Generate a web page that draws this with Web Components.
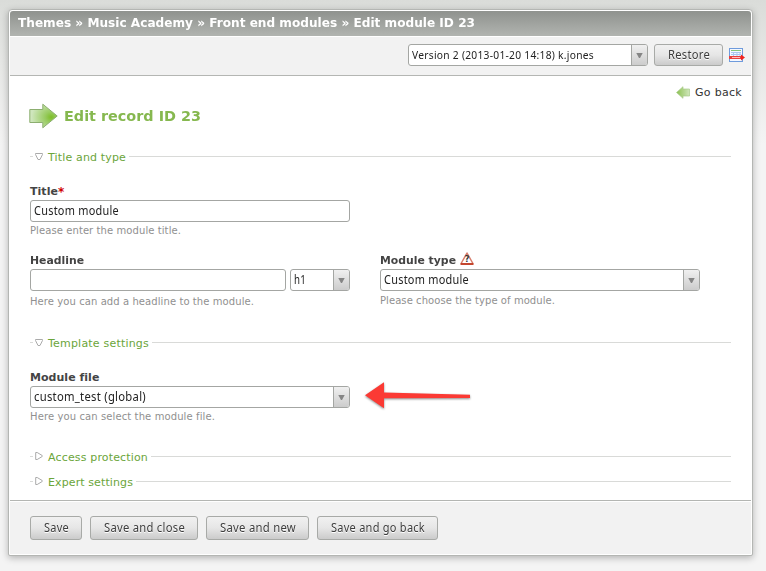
<!DOCTYPE html>
<html lang="en"><head><meta charset="utf-8"><title>Edit module</title>
<style>
html{height:100%;background:#f4f4f4}
body{margin:0;height:571px;overflow:hidden;box-sizing:border-box;padding:9px 0 0 8px;background:linear-gradient(#dadcd9 0,#e6e7e5 60px,#f4f4f4 145px);font-family:"DejaVu Sans",Verdana,sans-serif;font-size:11px;color:#444}
.row{display:flex}
</style></head><body>
<app-panel>
  <fit-text slot="title" w="457">Themes » Music Academy » Front end modules » Edit module ID 23</fit-text>
  <select-box slot="tools" width="240" small><fit-text w="182">Version 2 (2013-01-20 14:18) k.jones</fit-text></select-box>
  <push-button slot="tools" width="69" height="22"><fit-text w="42">Restore</fit-text></push-button>
  <version-icon slot="tools"></version-icon>
  <back-link><fit-text w="47">Go back</fit-text></back-link>
  <record-title><fit-text w="137">Edit record ID 23</fit-text></record-title>
  <form-legend open><fit-text w="78">Title and type</fit-text></form-legend>
  <form-field style="margin-top:19px"><fit-text slot="label" w="28">Title</fit-text><span slot="label" style="color:#d00000;font-size:12px">*</span>
    <text-box width="320"><fit-text w="85">Custom module</fit-text></text-box><fit-text slot="help" w="151">Please enter the module title.</fit-text></form-field>
  <div class="row" style="margin-top:15px">
    <form-field style="width:350px"><fit-text slot="label" w="54">Headline</fit-text>
      <text-box width="256"></text-box><select-box width="60"><fit-text w="12">h1</fit-text></select-box>
      <fit-text slot="help" w="224" style="margin-top:4px">Here you can add a headline to the module.</fit-text></form-field>
    <form-field><fit-text slot="label" w="76">Module type</fit-text><help-icon slot="label"></help-icon>
      <select-box width="320"><fit-text w="85">Custom module</fit-text></select-box><fit-text slot="help" w="175" style="margin-top:2px">Please choose the type of module.</fit-text></form-field>
  </div>
  <form-legend open style="margin-top:28px"><fit-text w="101">Template settings</fit-text></form-legend>
  <form-field style="margin-top:19px"><fit-text slot="label" w="69">Module file</fit-text>
    <select-box width="320"><fit-text w="112">custom_test (global)</fit-text></select-box><pointer-arrow></pointer-arrow><fit-text slot="help" w="185">Here you can select the module file.</fit-text></form-field>
  <form-legend style="margin-top:25px"><fit-text w="100">Access protection</fit-text></form-legend>
  <form-legend style="margin-top:9px"><fit-text w="85">Expert settings</fit-text></form-legend>
  <push-button slot="actions" width="52" height="24"><fit-text w="25">Save</fit-text></push-button>
  <push-button slot="actions" width="108" height="24"><fit-text w="81">Save and close</fit-text></push-button>
  <push-button slot="actions" width="103" height="24"><fit-text w="76">Save and new</fit-text></push-button>
  <push-button slot="actions" width="121" height="24"><fit-text w="94">Save and go back</fit-text></push-button>
</app-panel>
<script>
const make=(name,html,setup)=>customElements.define(name,class extends HTMLElement{
  connectedCallback(){
    if(this.shadowRoot)return;
    const t=document.createElement('template');t.innerHTML=html;
    this.attachShadow({mode:'open'}).append(t.content.cloneNode(true));
    if(this.hasAttribute('width'))this.style.width=this.getAttribute('width')+'px';
    if(this.hasAttribute('height'))this.style.height=this.getAttribute('height')+'px';
    if(setup)setup(this);
  }});
make('app-panel',`<style>
:host{display:flex;flex-direction:column;box-sizing:border-box;width:745px;height:547px;border:1px solid #b4b6b3;border-radius:4px 4px 2px 2px;background:#fff;padding:1px;box-shadow:0 2px 7px rgba(0,0,0,.27)}
header{height:25px;box-sizing:border-box;padding:0 8px;display:flex;line-height:24px;background:linear-gradient(#8f928e,#b1b4b0);border-radius:3px 3px 0 0;color:#fff;font-weight:bold;font-size:12.5px}
.tools{margin-top:1px;background:#f2f2f2;border-bottom:1px solid #b4b6b3;display:flex;justify-content:flex-end;align-items:flex-start;gap:6px;padding:7px 6px 0 0;box-sizing:border-box;height:39px}
main{height:424px;padding:0 20px;box-sizing:border-box}
footer{border-top:1px solid #b4b6b3;padding-top:1px;flex:1}
.actions{height:100%;box-sizing:border-box;padding:14px 20px;background:#f2f2f2;display:flex;gap:8px}
</style><header><slot name="title"></slot></header><div class="tools"><slot name="tools"></slot></div><main><slot></slot></main><footer><div class="actions"><slot name="actions"></slot></div></footer>`);
make('select-box',`<style>
:host{display:flex;box-sizing:border-box;height:22px;border:1px solid #a4a6a3;border-radius:3px;background:#fff;color:#222;font:12.5px/19px "Noto Sans","Open Sans",sans-serif;letter-spacing:.3px;overflow:hidden}
:host([small]){font-size:11.5px;line-height:20px}
span{flex:1;padding-left:3px}i{width:15px;border-left:1px solid #a4a6a3;background:linear-gradient(#f0f0f0,#ccc);display:flex;align-items:center;justify-content:center}
</style><span><slot></slot></span><i><svg width="7" height="5"><path d="M.3 0h6.4L4 5H3z" fill="#858585"/></svg></i>`);
make('text-box',`<style>:host{display:block;box-sizing:border-box;height:22px;border:1px solid #a4a6a3;border-radius:3px;background:#fff;color:#222;font:12.5px/19px "Noto Sans","Open Sans",sans-serif;letter-spacing:.3px;padding-left:3px}</style><slot></slot>`);
make('push-button',`<style>:host{display:flex;justify-content:center;align-items:center;box-sizing:border-box;border:1px solid #a8aaa7;border-radius:3px;background:linear-gradient(#f1f1f1,#e6e6e6 50%,#cbcbcb);color:#3c3c3c;text-shadow:0 1px #fff;font:12.5px/20px "Noto Sans","Open Sans",sans-serif;letter-spacing:.3px}</style><slot></slot>`);
make('version-icon',`<style>:host{display:block;width:16px;height:18px;margin-top:4px}svg{display:block;overflow:visible}</style><svg width="16" height="16"><rect x=".5" y=".5" width="13" height="13" fill="#f4f8ff" stroke="#6f9bdc"/><path d="M2 2.5h10" stroke="#86c47a"/><path d="M2 4.5h10M2 6.5h10M4.5 4v5M8 4v5M11 4v5" stroke="#a9c6ef"/><path d="M0 9.5h12" stroke="#e8403c" stroke-width="3"/><path d="M3 9.5h8" stroke="#fbb"/><path d="M12 6.5l4 3-4 3z" fill="#f2221c"/></svg>`);
make('back-link',`<style>:host{display:flex;justify-content:flex-end;align-items:center;gap:5px;height:14px;margin-top:9px;margin-right:-11px;color:#333}svg{display:block}</style><svg width="14" height="13"><defs><linearGradient id="g"><stop stop-color="#8cc152"/><stop offset="1" stop-color="#d0e6bc"/></linearGradient></defs><path d="M.5 6.5L7 .7V3h6.5v7H7v2.3z" fill="url(#g)" stroke="#a9cb8b" stroke-width=".7"/></svg><slot></slot>`);
make('record-title',`<style>:host{display:flex;align-items:center;gap:6px;height:26px;margin-top:4px;margin-left:-1px;color:#86b84f;font-weight:bold;font-size:14.5px}svg{display:block}</style><svg width="29" height="26"><defs><radialGradient id="g" cx=".78" cy=".55" r=".72"><stop stop-color="#7dbd28"/><stop offset=".3" stop-color="#98cb60"/><stop offset="1" stop-color="#cfe6bd"/></radialGradient></defs><path d="M.8 6.5h13V1.2L28.2 13 13.8 24.8V19.5H.8z" fill="url(#g)" stroke="#8cae70" stroke-width="1"/></svg><slot></slot>`);
make('form-legend',`<style>:host{display:flex;align-items:center;height:16px;color:#6ba53a}:host(:first-of-type){margin-top:20px}b{height:1px;background:#d9dad8;width:3px;margin:0 2px 2px 0}b.r{flex:1;margin:0 0 2px 3px}svg{display:block;margin:0 5px 1px 0}</style><b></b><svg width="8" height="9"><path fill="none" stroke="#aaa"/></svg><slot></slot><b class="r"></b>`,
 e=>e.shadowRoot.querySelector('path').setAttribute('d',e.hasAttribute('open')?'M.5 1.5h7v1L5 7.5H3L.5 2.5z':'M.7 .5h1.5L7.2 3.5v1L2.2 7.5H.7z'));
make('form-field',`<style>:host{display:block}.l{display:flex;align-items:center;height:16px;line-height:14px;padding-bottom:1px;box-sizing:border-box;font-weight:bold;color:#444}.c{display:flex;gap:4px}.h{height:16px;display:flex;align-items:center;color:#909090;font-size:10px}</style><div class="l"><slot name="label"></slot></div><div class="c"><slot></slot></div><div class="h"><slot name="help"></slot></div>`);
make('help-icon',`<style>:host{display:block;margin-left:4px;margin-top:-5px}svg{display:block}text{font:bold 8px "DejaVu Sans",sans-serif}</style><svg width="14" height="13"><path d="M7 1L13.2 12H.8z" fill="#fff" stroke="#d77d6c" stroke-width="1.5" stroke-linejoin="round"/><path d="M.8 12h12.4" stroke="#bd3218" stroke-width="1.6"/><text x="4.7" y="10.3" fill="#333">?</text></svg>`);
make('pointer-arrow',`<style>:host{display:block;height:22px;margin-left:10px}svg{display:block;margin-top:-5px;filter:drop-shadow(0 1px 1px rgba(0,0,0,.45))}</style><svg width="108" height="30"><path d="M1 14.2L20 1.2v10.2l86 2.4v3.3l-86 .2v9.9z" fill="#fb3a34"/></svg>`);
// Label that occupies a given width: long runs are condensed, short runs are spaced out.
make('fit-text',`<style>:host{display:inline-block;white-space:nowrap}span{display:inline-block;transform-origin:0 50%}</style><span><slot></slot></span>`,e=>{
 const s=e.shadowRoot.querySelector('span'),w=+e.getAttribute('w'),n=e.textContent.length;
 e.fit=()=>{const r=s.getBoundingClientRect().width;e.style.width=w+'px';
  if(r>w)s.style.transform='scaleX('+w/r+')';
  else s.style.letterSpacing=(parseFloat(getComputedStyle(s).letterSpacing)||0)+(w-r)/n+'px';};});
document.querySelectorAll('fit-text').forEach(e=>e.fit());
</script>
</body></html>
